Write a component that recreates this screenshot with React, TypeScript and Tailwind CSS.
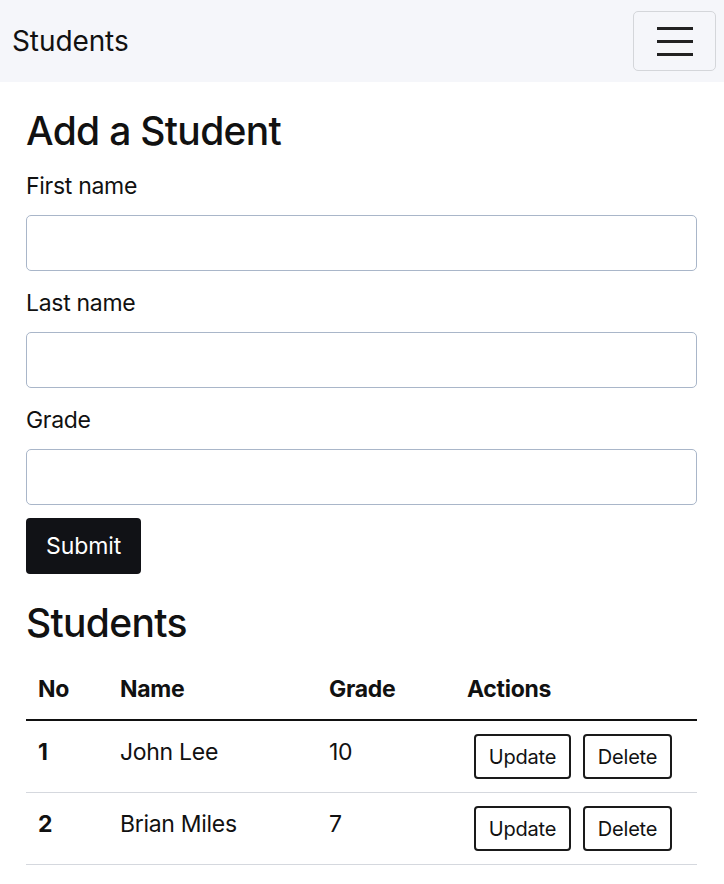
import React from "react";

const students = [
  { no: 1, name: "John Lee", grade: 10 },
  { no: 2, name: "Brian Miles", grade: 7 },
];

function Field({ label }: { label: string }) {
  return (
    <div className="flex flex-col pt-[17px]">
      <label className="pb-[14px] text-[23px] leading-[30px] tracking-[-0.3px]">{label}</label>
      <input className="h-[56px] w-full rounded-[5px] border border-[#a9b6c9] bg-white px-3 outline-none" />
    </div>
  );
}

export default function App() {
  return (
    <div className="min-h-screen bg-white text-[#111] font-['Inter',sans-serif]">
      {/* Navbar */}
      <header className="flex h-[82px] items-center justify-between bg-[#f5f6fa] pl-[12px] pr-[8px]">
        <span className="text-[28px] tracking-[-0.1px]">Students</span>
        <button className="flex h-[60px] w-[83px] flex-col items-center justify-center gap-[10px] rounded-[5px] border border-[#d4d6da]">
          <span className="block h-[3px] w-[36px] bg-[#222]" />
          <span className="block h-[3px] w-[36px] bg-[#222]" />
          <span className="block h-[3px] w-[36px] bg-[#222]" />
        </button>
      </header>

      <main className="px-[26px] pr-[27px]">
        <h2 className="pt-[25px] text-[39px] font-medium leading-[47px] tracking-[-0.7px]">Add a Student</h2>
        <form className="flex flex-col">
          <Field label="First name" />
          <Field label="Last name" />
          <Field label="Grade" />
          <div className="pt-[13px]">
            <button
              type="button"
              className="h-[56px] rounded-[4px] bg-[#111216] px-[20px] text-[23px] tracking-[-0.1px] text-white"
            >
              Submit
            </button>
          </div>
        </form>

        <h2 className="pt-[25px] pb-[12px] text-[39px] font-medium leading-[47px] tracking-[-0.7px]">Students</h2>
        <table className="w-full border-collapse text-[23px] leading-[30px] tracking-[-0.3px]">
          <thead>
            <tr className="border-b-2 border-[#111]">
              <th className="w-[82px] px-[12px] pt-[16px] pb-[15px] text-left font-bold">No</th>
              <th className="w-[209px] px-[12px] pt-[16px] pb-[15px] text-left font-bold">Name</th>
              <th className="w-[138px] px-[12px] pt-[16px] pb-[15px] text-left font-bold">Grade</th>
              <th className="px-[12px] pt-[16px] pb-[15px] text-left font-bold">Actions</th>
            </tr>
          </thead>
          <tbody>
            {students.map((s) => (
              <tr key={s.no} className="border-b border-[#d5d8de]">
                <td className="px-[12px] pt-[16px] align-top font-bold">{s.no}</td>
                <td className="px-[12px] pt-[16px] align-top">{s.name}</td>
                <td className="px-[12px] pt-[16px] align-top">{s.grade}</td>
                <td className="pl-[19px] pt-[13px] pb-[13px] align-top">
                  <div className="flex gap-[12px]">
                    <button className="h-[45px] w-[97px] rounded-[4px] border-2 border-[#1a1a1a] text-[20px] tracking-[-0.2px]">
                      Update
                    </button>
                    <button className="h-[45px] w-[89px] rounded-[4px] border-2 border-[#1a1a1a] text-[20px] tracking-[-0.2px]">
                      Delete
                    </button>
                  </div>
                </td>
              </tr>
            ))}
          </tbody>
        </table>
      </main>
    </div>
  );
}
